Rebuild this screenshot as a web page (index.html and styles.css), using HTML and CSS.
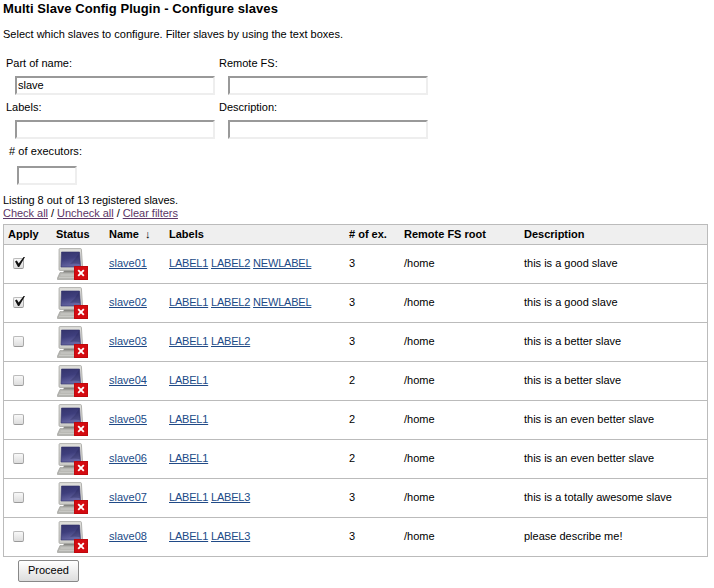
FILE: index.html
```html
<!DOCTYPE html>
<html lang="en">
<head>
<meta charset="utf-8">
<title>Configure slaves</title>
<link rel="stylesheet" href="styles.css">
</head>
<body>
<svg class="defs" width="0" height="0" aria-hidden="true">
  <defs>
    <linearGradient id="screen" x1="0" y1="0" x2="0.3" y2="1"><stop offset="0" stop-color="#34346c"/><stop offset="0.5" stop-color="#3e3e7c"/><stop offset="1" stop-color="#6666a2"/></linearGradient>
    <linearGradient id="case" x1="0" y1="0" x2="0" y2="1"><stop offset="0" stop-color="#e0e0dc"/><stop offset="1" stop-color="#ccccc8"/></linearGradient>
  </defs>
  <symbol id="offline" viewBox="0 0 32 32">
    <path d="M4 24.500h20l3 3v4H1.500v-1.500z" fill="#b4b4b0" stroke="#989894" stroke-width=".6"/>
    <path d="M4.500 27h18M3 29.300h20" stroke="#cfcfcb" stroke-width="1"/>
    <path d="M9 21h12l1 3.500H7z" fill="#888884"/>
    <path d="M4 .6h20.500q.8 0 .9.8l1.300 20q0 1-1 1H4q-1 0-1-1L3.100 1.400q.1-.8.9-.8z" fill="url(#case)" stroke="#a2a29e" stroke-width=".8"/>
    <path d="M5.500 4h18l1 15H5z" fill="url(#screen)" stroke="#303068" stroke-width=".6"/>
    <path d="M23.500 4.300l.8 12Q18 15 14 16 20 11 23.500 4.300z" fill="#20204e" opacity=".3"/>
    <path d="M18 18h14v14H18z" fill="#d40a10"/>
    <path d="M18.500 18.500h13v13h-13z" fill="none" stroke="#bd080d"/>
    <path d="M22.200 22.200l5.600 5.600M27.800 22.200l-5.600 5.600" stroke="#fff" stroke-width="1.900"/>
  </symbol>
</svg>
<h1>Multi Slave Config Plugin - Configure slaves</h1>
<p class="intro">Select which slaves to configure. Filter slaves by using the text boxes.</p>
<form class="filters">
  <label class="field">Part of name:<input type="text" value="slave"></label>
  <label class="field">Remote FS:<input type="text"></label>
  <label class="field">Labels:<input type="text"></label>
  <label class="field">Description:<input type="text"></label>
  <label class="field executors"># of executors:<input type="text"></label>
</form>
<div class="summary">Listing 8 out of 13 registered slaves.<br><a href="#">Check all</a> / <a href="#">Uncheck all</a> / <a href="#">Clear filters</a></div>
<table>
  <colgroup><col class="c-apply"><col class="c-status"><col class="c-name"><col class="c-labels"><col class="c-ex"><col class="c-root"><col></colgroup>
  <thead><tr><th>Apply</th><th>Status</th><th>Name <span class="sort">↓</span></th><th>Labels</th><th># of ex.</th><th>Remote FS root</th><th>Description</th></tr></thead>
  <tbody>
    <tr><td><input type="checkbox" checked></td><td><svg class="pc"><use href="#offline"/></svg></td><td><a href="#">slave01</a></td><td class="labels"><a href="#">LABEL1</a> <a href="#">LABEL2</a> <a href="#">NEWLABEL</a></td><td>3</td><td>/home</td><td>this is a good slave</td></tr>
    <tr><td><input type="checkbox" checked></td><td><svg class="pc"><use href="#offline"/></svg></td><td><a href="#">slave02</a></td><td class="labels"><a href="#">LABEL1</a> <a href="#">LABEL2</a> <a href="#">NEWLABEL</a></td><td>3</td><td>/home</td><td>this is a good slave</td></tr>
    <tr><td><input type="checkbox"></td><td><svg class="pc"><use href="#offline"/></svg></td><td><a href="#">slave03</a></td><td class="labels"><a href="#">LABEL1</a> <a href="#">LABEL2</a></td><td>3</td><td>/home</td><td>this is a better slave</td></tr>
    <tr><td><input type="checkbox"></td><td><svg class="pc"><use href="#offline"/></svg></td><td><a href="#">slave04</a></td><td class="labels"><a href="#">LABEL1</a></td><td>2</td><td>/home</td><td>this is a better slave</td></tr>
    <tr><td><input type="checkbox"></td><td><svg class="pc"><use href="#offline"/></svg></td><td><a href="#">slave05</a></td><td class="labels"><a href="#">LABEL1</a></td><td>2</td><td>/home</td><td>this is an even better slave</td></tr>
    <tr><td><input type="checkbox"></td><td><svg class="pc"><use href="#offline"/></svg></td><td><a href="#">slave06</a></td><td class="labels"><a href="#">LABEL1</a></td><td>2</td><td>/home</td><td>this is an even better slave</td></tr>
    <tr><td><input type="checkbox"></td><td><svg class="pc"><use href="#offline"/></svg></td><td><a href="#">slave07</a></td><td class="labels"><a href="#">LABEL1</a> <a href="#">LABEL3</a></td><td>3</td><td>/home</td><td>this is a totally awesome slave</td></tr>
    <tr><td><input type="checkbox"></td><td><svg class="pc"><use href="#offline"/></svg></td><td><a href="#">slave08</a></td><td class="labels"><a href="#">LABEL1</a> <a href="#">LABEL3</a></td><td>3</td><td>/home</td><td>please describe me!</td></tr>
  </tbody>
</table>
<button type="button">Proceed</button>
</body>
</html>
```
FILE: styles.css
```css
* { box-sizing: border-box; }
body {
  margin: 0;
  padding: 1px 6px 0 3px;
  background: #fff;
  color: #000;
  font: 11px/13px "Liberation Sans", Arial, sans-serif;
}
.defs { display: block; }
h1 { margin: 0; font-size: 13px; line-height: 15px; letter-spacing: .06px; }
.intro { margin: 12px 0 0; }
.filters {
  display: grid;
  grid-template-columns: 213px 213px;
  grid-auto-rows: 44px;
  margin: 16px 0 0 3px;
}
.field input {
  display: block;
  width: 200px;
  height: 19px;
  margin: 6px 0 0 9px;
  padding: 0 1px 2px;
  border: 2px solid;
  border-color: #999 #eee #eee #999;
  border-radius: 0;
  background: #fff;
  color: #000;
  font: inherit;
}
.executors { padding-left: 3px; letter-spacing: .06px; }
.executors input { width: 60px; margin: 8px 0 0 8px; }
.summary { margin-top: 5px; letter-spacing: -.03px; }
.summary a { color: #5c3566; }
table {
  width: 705px;
  margin-top: 4px;
  border: 1px solid #bbb;
  border-spacing: 0;
  border-collapse: collapse;
  table-layout: fixed;
}
.c-apply { width: 48px; }
.c-status { width: 53px; }
.c-name { width: 60px; }
.c-labels { width: 180px; }
.c-ex { width: 55px; }
.c-root { width: 120px; }
th, td {
  padding: 0 0 0 4.5px;
  border-bottom: 1px solid #bbb;
  text-align: left;
  white-space: nowrap;
}
th { height: 20px; background: #efefef; }
td { height: 39px; padding-bottom: 2px; }
th:first-child, td:first-child { padding-left: 4px; }
td:nth-child(2) { padding-bottom: 0; }
td a { color: #204a87; }
.labels { letter-spacing: -.2px; }
.sort { margin-left: 3px; font-weight: normal; }
.pc { display: block; width: 32px; height: 32px; }
td input {
  appearance: none;
  display: block;
  width: 11px;
  height: 11px;
  margin: 1px 0 0 5px;
  border: 1px solid;
  border-color: #bbb #aaa #999 #bbb;
  border-radius: 2px;
  background: linear-gradient(#f8f8f8, #ddd);
  position: relative;
}
td input:checked::after {
  content: "";
  position: absolute;
  left: 1px;
  top: -2px;
  width: 10px;
  height: 10px;
  background: #111;
  clip-path: polygon(0 45%, 18% 36%, 37% 64%, 86% 0, 100% 0, 42% 100%, 30% 100%);
}
button {
  display: block;
  width: 61px;
  height: 22px;
  margin: 3px 0 0 15px;
  padding: 0 0 1px;
  border: 1px solid #888;
  border-radius: 2px;
  background: linear-gradient(#fff, #ddd);
  color: #000;
  font: inherit;
}
```
